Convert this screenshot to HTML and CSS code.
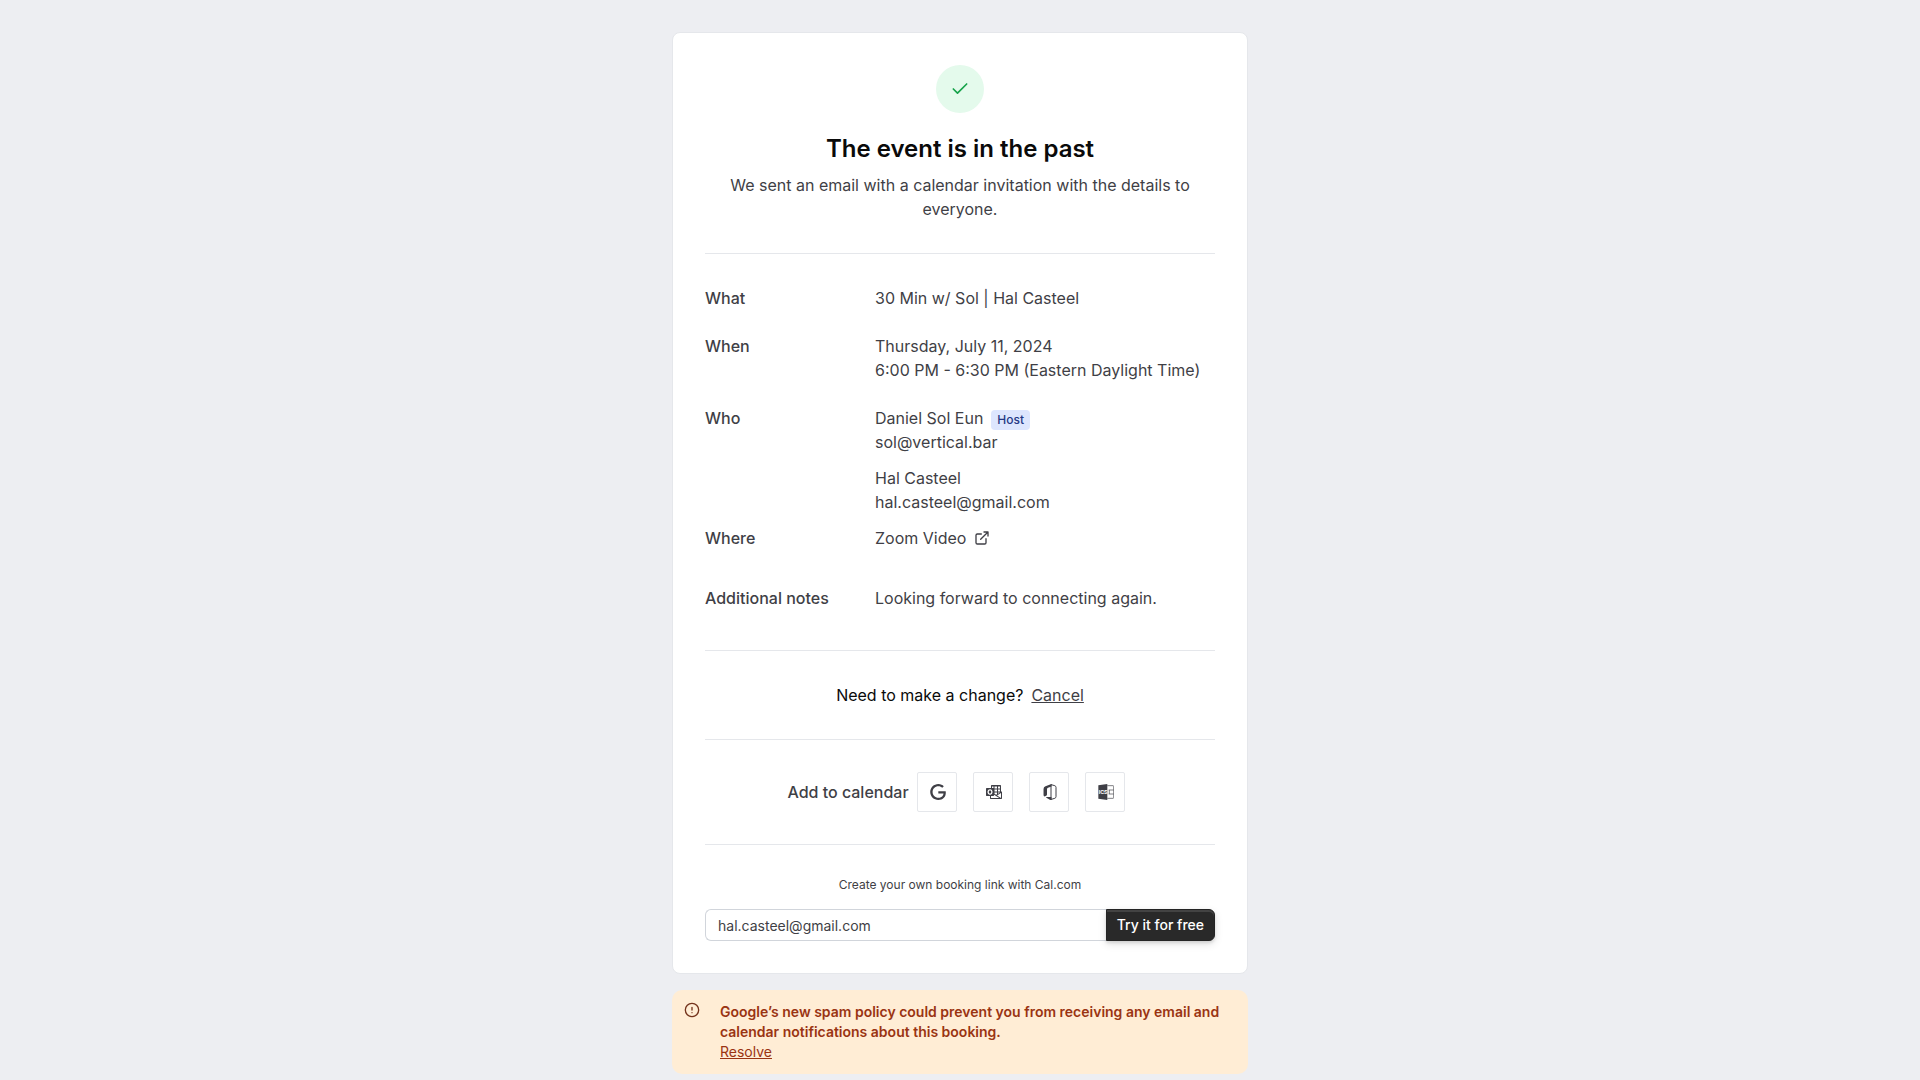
FILE: index.html
```html
<!DOCTYPE html>
<html lang="en">
<head>
  <meta charset="utf-8">
  <meta name="viewport" content="width=device-width, initial-scale=1">
  <title>The event is in the past</title>
  <link rel="stylesheet" href="styles.css">
</head>
<body>
  <main class="booking">
    <article class="card">
      <header class="status">
        <div class="status-badge">
          <svg class="status-icon" viewBox="0 0 24 24" fill="none" stroke="currentColor" stroke-width="2" stroke-linecap="round" stroke-linejoin="round" aria-hidden="true"><path d="M20 6 9 17l-5-5"/></svg>
        </div>
        <h1 class="status-title">The event is in the past</h1>
        <p class="status-text">We sent an email with a calendar invitation with the details to everyone.</p>
      </header>

      <dl class="details section">
        <div class="detail">
          <dt>What</dt>
          <dd>30 Min w/ Sol | Hal Casteel</dd>
        </div>
        <div class="detail">
          <dt>When</dt>
          <dd>Thursday, July 11, 2024<br>6:00 PM - 6:30 PM (Eastern Daylight Time)</dd>
        </div>
        <div class="detail detail-people">
          <dt>Who</dt>
          <dd class="people">
            <div>
              <p class="person-name">Daniel Sol Eun <span class="tag">Host</span></p>
              <p>sol@vertical.bar</p>
            </div>
            <div>
              <p>Hal Casteel</p>
              <p>hal.casteel@gmail.com</p>
            </div>
          </dd>
        </div>
        <div class="detail detail-where">
          <dt>Where</dt>
          <dd>
            <a class="where-link" href="#zoom">Zoom Video
              <svg class="icon" viewBox="0 0 24 24" fill="none" stroke="currentColor" stroke-width="2" stroke-linecap="round" stroke-linejoin="round" aria-hidden="true"><path d="M15 3h6v6M10 14 21 3M18 13v6a2 2 0 0 1-2 2H5a2 2 0 0 1-2-2V8a2 2 0 0 1 2-2h6"/></svg>
            </a>
          </dd>
        </div>
        <div class="detail detail-notes">
          <dt>Additional notes</dt>
          <dd>Looking forward to connecting again.</dd>
        </div>
      </dl>

      <p class="change section">
        <span>Need to make a change?</span>
        <a href="#cancel">Cancel</a>
      </p>

      <div class="calendars section">
        <span class="calendars-label">Add to calendar</span>
        <div class="calendars-list">
          <a class="calendar-link" href="#google" aria-label="Google Calendar">
            <svg class="icon" viewBox="0 0 24 24" fill="currentColor" aria-hidden="true"><path d="M12.48 10.92v3.28h7.84c-.24 1.84-.853 3.187-1.787 4.133-1.147 1.147-2.933 2.4-6.053 2.4-4.827 0-8.6-3.893-8.6-8.72s3.773-8.72 8.6-8.72c2.6 0 4.507 1.027 5.907 2.347l2.307-2.307C18.747 1.44 16.133 0 12.48 0 5.867 0 .307 5.387.307 12s5.56 12 12.173 12c3.573 0 6.267-1.173 8.373-3.36 2.16-2.16 2.84-5.213 2.84-7.667 0-.76-.053-1.467-.173-2.053H12.48z"/></svg>
          </a>
          <a class="calendar-link" href="#outlook" aria-label="Microsoft Outlook">
            <svg class="icon" viewBox="0 0 24 24" fill="currentColor" aria-hidden="true"><path d="M7.88 12.04q0 .45-.11.87-.1.41-.33.74-.22.33-.58.52-.37.2-.87.2t-.85-.2q-.35-.21-.57-.55-.22-.33-.33-.75-.1-.42-.1-.86t.1-.87q.1-.43.34-.76.22-.34.59-.54.36-.2.87-.2t.86.2q.35.21.57.55.22.34.31.77.1.43.1.88zM24 12v9.38q0 .46-.33.8-.33.32-.8.32H7.13q-.46 0-.8-.33-.32-.33-.32-.8V18H1q-.41 0-.7-.3-.3-.29-.3-.7V7q0-.41.3-.7Q.58 6 1 6h6.5V2.55q0-.44.3-.75.3-.3.75-.3h12.9q.44 0 .75.3.3.3.3.75V10.85l1.24.72h.01q.1.07.18.18.07.12.07.25zm-6-8.25v3h3v-3zm0 4.5v3h3v-3zm0 4.5v1.83l3.05-1.83zm-5.25-9v3h3.75v-3zm0 4.5v3h3.75v-3zm0 4.5v2.03l2.41 1.5 1.34-.8v-2.73zM9 3.75V6h2l.13.01.12.04v-2.3zM5.98 15.98q.9 0 1.6-.3.7-.32 1.19-.86.48-.55.73-1.28.25-.74.25-1.61 0-.83-.25-1.55-.24-.71-.71-1.24t-1.15-.83q-.68-.3-1.55-.3-.92 0-1.64.3-.71.3-1.2.85-.5.54-.75 1.3-.25.74-.25 1.63 0 .85.26 1.56.26.72.74 1.23.48.52 1.17.81.69.3 1.56.3zM7.5 21h12.39L12 16.08V17q0 .41-.3.7-.29.3-.7.3H7.5zm15-.13v-7.24l-5.9 3.54Z"/></svg>
          </a>
          <a class="calendar-link" href="#office" aria-label="Microsoft Office 365">
            <svg class="icon" viewBox="0 0 24 24" aria-hidden="true"><path fill="currentColor" d="M14.200 0 5.200 3.500Q2.300 4.800 2.300 7.500v9q0 2.200 1.600 2.200l2.400-1q1.200-.5 1.200-1.800V8q0-1.700 1.500-2.300l5.200-1.900zM6.500 19.500h7.700V24q-1.500 0-2.400-.5l-5.200-2.900q-.9-.8-.1-1.100z"/><path fill="none" stroke="currentColor" stroke-width="1.500" d="m13.500.9 5.800 1.700q1.700.6 1.700 2.400v14q0 1.800-1.700 2.400l-5.800 1.800z"/></svg>
          </a>
          <a class="calendar-link" href="#ics" aria-label="ICS file">
            <svg class="icon" viewBox="0 0 24 24" aria-hidden="true"><path fill="currentColor" d="M14 0 .5 2v20L14 24z"/><path fill="none" stroke="currentColor" d="M14 2.500h8.500q1 0 1 1v17q0 1-1 1H14M16 9h7.500M16 15h7.500M17 9v6"/><text class="ics-text" x="1" y="15">ICS</text></svg>
          </a>
        </div>
      </div>

      <form class="signup section">
        <label class="signup-label" for="email">Create your own booking link with Cal.com</label>
        <div class="signup-row">
          <input class="signup-input" id="email" type="email" value="hal.casteel@gmail.com">
          <button class="signup-button" type="submit">Try it for free</button>
        </div>
      </form>
    </article>

    <aside class="alert">
      <svg class="icon alert-icon" viewBox="0 0 24 24" fill="none" stroke="currentColor" stroke-width="2" stroke-linecap="round" stroke-linejoin="round" aria-hidden="true"><circle cx="12" cy="12" r="10"/><path d="M12 8v4M12 16h.01"/></svg>
      <div>
        <p class="alert-title">Google’s new spam policy could prevent you from receiving any email and calendar notifications about this booking.</p>
        <a href="#resolve">Resolve</a>
      </div>
    </aside>
  </main>
</body>
</html>
```
FILE: styles.css
```css
:root {
  --bg: #edeef2;
  --text: #3f3f46;
  --text-strong: #0a0a0a;
  --border: #e5e7eb;
}

*,
*::before,
*::after {
  box-sizing: border-box;
}

body {
  margin: 0;
  background: var(--bg);
  color: var(--text);
  font-family: Inter, "Liberation Sans", sans-serif;
  font-size: 16px;
  line-height: 24px;
}

h1,
p,
dl,
dd {
  margin: 0;
}

a {
  color: inherit;
}

.booking {
  max-width: 576px;
  margin: 0 auto;
  padding-top: 32px;
}

.icon {
  display: block;
  flex: none;
  width: 16px;
  height: 16px;
}

.card {
  padding: 32px;
  border: 1px solid var(--border);
  border-radius: 8px;
  background: #fff;
}

.section {
  padding-top: 32px;
  border-top: 1px solid var(--border);
}

.status {
  padding-bottom: 32px;
  text-align: center;
}

.status-badge {
  display: flex;
  align-items: center;
  justify-content: center;
  width: 48px;
  height: 48px;
  margin: 0 auto 24px;
  border-radius: 50%;
  background: #e4faec;
  color: #16a34a;
}

.status-icon {
  width: 20px;
  height: 20px;
}

.status-title {
  margin-bottom: 12px;
  color: var(--text-strong);
  font-size: 24px;
  font-weight: 600;
  line-height: 24px;
}

.details {
  display: flex;
  flex-direction: column;
  gap: 24px;
  padding-bottom: 40px;
}

.detail {
  display: grid;
  grid-template-columns: 1fr 2fr;
}

.detail dt {
  font-weight: 500;
}

.detail-people {
  margin-bottom: -12px;
}

.detail-notes {
  margin-top: 12px;
}

.people {
  display: flex;
  flex-direction: column;
  gap: 12px;
}

.person-name {
  display: flex;
  gap: 8px;
}

.tag {
  align-self: flex-end;
  padding: 2px 6px;
  border-radius: 4px;
  background: #dde6fe;
  color: #253985;
  font-size: 12px;
  font-weight: 500;
  line-height: 16px;
}

.where-link {
  display: inline-flex;
  align-items: center;
  gap: 8px;
  text-decoration: none;
}

.change {
  display: flex;
  justify-content: center;
  gap: 8px;
  padding-bottom: 32px;
  color: var(--text-strong);
}

.change a {
  color: var(--text);
}

.calendars {
  display: flex;
  align-items: center;
  justify-content: center;
  padding-bottom: 32px;
}

.calendars-label {
  font-weight: 500;
}

.calendars-list {
  display: flex;
  gap: 16px;
  margin: 0 8px;
}

.calendar-link {
  display: flex;
  align-items: center;
  width: 40px;
  height: 40px;
  padding-left: 12px;
  border: 1px solid var(--border);
  border-radius: 2px;
}

.ics-text {
  fill: #fff;
  font-size: 8px;
  font-weight: 700;
}

.signup-label {
  display: block;
  margin-bottom: 16px;
  font-size: 12px;
  line-height: 16px;
  text-align: center;
}

.signup-row {
  display: flex;
}

.signup-input {
  flex: 1;
  min-width: 0;
  height: 32px;
  padding: 0 12px;
  border: 1px solid #d1d5db;
  border-right: 0;
  border-radius: 6px 0 0 6px;
  background: #fff;
  color: var(--text);
  font: inherit;
  font-size: 14px;
}

.signup-button {
  height: 32px;
  padding: 0 10px;
  border: 1px solid #242424;
  border-radius: 0 6px 6px 0;
  background: #292929;
  box-shadow:
    inset 0 2px 0 rgba(255, 255, 255, 0.12),
    0 2px 3px rgba(0, 0, 0, 0.1),
    0 3px 8px rgba(0, 0, 0, 0.12);
  color: #fff;
  font: inherit;
  font-size: 14px;
  font-weight: 500;
}

.alert {
  display: flex;
  gap: 20px;
  margin-top: 16px;
  padding: 12px;
  border-radius: 10px;
  background: #ffedd5;
  color: #9a3412;
  font-size: 14px;
  line-height: 20px;
}

.alert-icon {
  color: #73321b;
}

.alert-title {
  font-weight: 600;
}
```
